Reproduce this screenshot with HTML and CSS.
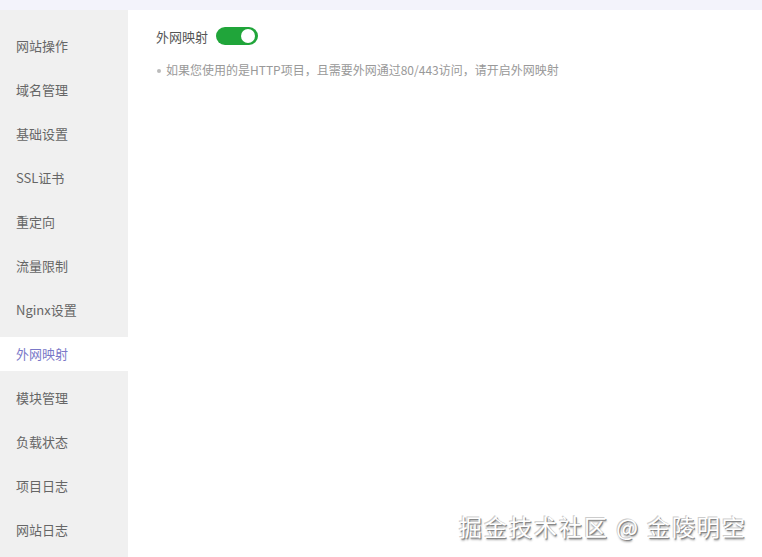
FILE: index.html
```html
<!DOCTYPE html>
<html lang="zh-CN">
<head>
  <meta charset="UTF-8">
  <title>外网映射</title>
  <link rel="stylesheet" href="styles.css">
</head>
<body>
  <div class="top-strip"></div>
  <div class="layout">
    <ul class="side-menu">
      <li>网站操作</li>
      <li>域名管理</li>
      <li>基础设置</li>
      <li>SSL证书</li>
      <li>重定向</li>
      <li>流量限制</li>
      <li>Nginx设置</li>
      <li class="active">外网映射</li>
      <li>模块管理</li>
      <li>负载状态</li>
      <li>项目日志</li>
      <li>网站日志</li>
    </ul>
    <div class="content">
      <div class="form-row">
        <span class="label">外网映射</span>
        <span class="switch on"><span class="knob"></span></span>
      </div>
      <ul class="tips">
        <li>如果您使用的是HTTP项目，且需要外网通过80/443访问，请开启外网映射</li>
      </ul>
    </div>
  </div>
  <div class="watermark">掘金技术社区 @ 金陵明空</div>
</body>
</html>
```

FILE: styles.css
```css
body {
  margin: 0;
  font-family: "Microsoft YaHei", "Noto Sans CJK SC", "Noto Sans", sans-serif;
  background: #fff;
  color: #555;
  width: 762px;
  height: 557px;
  overflow: hidden;
  position: relative;
}

.top-strip {
  height: 10px;
  background: #f3f3fb;
}

.layout {
  display: flex;
  height: 547px;
}

.side-menu {
  list-style: none;
  margin: 0;
  padding: 19px 0 0;
  width: 128px;
  background: #f0f0f0;
  display: flex;
  flex-direction: column;
  gap: 10px;
}

.side-menu li {
  height: 34px;
  line-height: 34px;
  padding-left: 16px;
  font-size: 13px;
  color: #666;
}

.side-menu li.active {
  background: #fff;
  color: #7a78c8;
}

.content {
  flex: 1;
  padding: 16px 0 0 28px;
}

.form-row {
  display: flex;
  align-items: center;
  height: 20px;
}

.label {
  font-size: 13px;
  color: #555;
  width: 60px;
}

.switch {
  width: 42px;
  height: 18px;
  border-radius: 9px;
  background: #20a53a;
  position: relative;
}

.switch .knob {
  position: absolute;
  right: 3px;
  top: 2px;
  width: 14px;
  height: 14px;
  border-radius: 50%;
  background: #fff;
}

.tips {
  list-style: none;
  margin: 14px 0 0;
  padding: 0;
}

.tips li {
  font-size: 12px;
  color: #999;
  line-height: 20px;
  padding-left: 10px;
  position: relative;
}

.tips li::before {
  content: "";
  position: absolute;
  left: 1px;
  top: 9px;
  width: 4px;
  height: 4px;
  border-radius: 50%;
  background: #bbb;
}

.watermark {
  position: absolute;
  left: 459px;
  top: 509px;
  font-size: 23px;
  color: #fff;
  letter-spacing: 2px;
  text-shadow: 1px 1px 0 #888, -1px -1px 0 #ccc, 1px 2px 2px #999;
}
```
